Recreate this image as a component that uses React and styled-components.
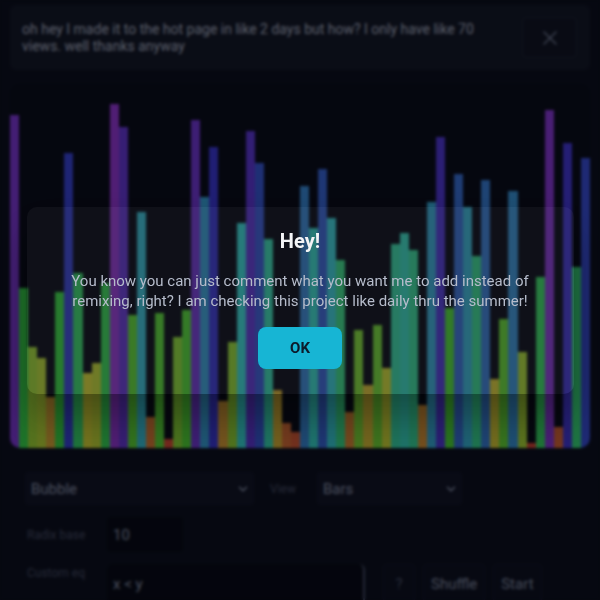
import React from 'react';
import styled, { createGlobalStyle } from 'styled-components';
import { X, ChevronDown } from 'lucide-react';

// bar heights in px, read left to right
const bars = [
  333, 160, 101, 90, 51, 156, 295, 175, 75, 85, 165, 344, 321, 133, 236, 31,
  135, 9, 111, 138, 328, 251, 301, 47, 106, 225, 317, 285, 209, 58, 25, 16,
  262, 220, 279, 230, 188, 36, 118, 63, 123, 80, 204, 215, 198, 43, 246, 311,
  140, 274, 241, 192, 268, 69, 129, 257, 96, 5, 171, 338, 21, 305, 181, 290,
];

const barColor = (h) => `hsl(${Math.round((h / 350) * 280)}, 66%, 53%)`;

const App = () => {
  return (
    <>
      <GlobalStyle />
      <Page>
        <Banner>
          <BannerText>
            oh hey I made it to the hot page in like 2 days but how? I only have like 70 views. well thanks anyway
          </BannerText>
          <CloseButton aria-label="Close">
            <X size={24} strokeWidth={1.5} />
          </CloseButton>
        </Banner>

        <Chart>
          {bars.map((h, i) => (
            <Bar key={i} style={{ height: h, background: barColor(h) }} />
          ))}
        </Chart>

        <Controls>
          <Row $gap={16}>
            <SelectWrap $width={229}>
              <Select defaultValue="Bubble">
                <option>Bubble</option>
                <option>Quick</option>
                <option>Merge</option>
              </Select>
              <Chevron size={14} strokeWidth={2.5} />
            </SelectWrap>
            <Label $gapRight={5}>View</Label>
            <SelectWrap $width={145}>
              <Select defaultValue="Bars">
                <option>Bars</option>
                <option>Dots</option>
              </Select>
              <Chevron size={14} strokeWidth={2.5} />
            </SelectWrap>
          </Row>

          <Row $gap={8}>
            <Label $width={74}>Radix base</Label>
            <NumberInput defaultValue="10" />
          </Row>

          <Row $gap={8} $top>
            <Label $width={74}>Custom eq</Label>
            <EqInput defaultValue="x < y" />
            <Button $dim>?</Button>
            <Button>Shuffle</Button>
            <Button>Start</Button>
          </Row>
        </Controls>
      </Page>

      <Overlay>
        <Modal>
          <ModalTitle>Hey!</ModalTitle>
          <ModalText>
            You know you can just comment what you want me to add instead of remixing, right? I am checking this project like daily thru the summer!
          </ModalText>
          <OkButton>OK</OkButton>
        </Modal>
      </Overlay>
    </>
  );
};

const GlobalStyle = createGlobalStyle`
  html, body {
    margin: 0;
    background: #0c1020;
  }

  body {
    font-family: Roboto, "Noto Sans", "Liberation Sans", sans-serif;
  }

  * {
    box-sizing: border-box;
  }
`;

const Page = styled.div`
  padding: 5px 10px 0;
`;

const Banner = styled.div`
  display: flex;
  align-items: center;
  justify-content: space-between;
  height: 65px;
  padding: 0 13px 0 12px;
  background: #131829;
  border-radius: 6px;
`;

const BannerText = styled.p`
  margin: 0;
  max-width: 478px;
  font-size: 14px;
  line-height: 17px;
  color: #a9b0c5;
`;

const CloseButton = styled.button`
  width: 55px;
  height: 41px;
  display: flex;
  align-items: center;
  justify-content: center;
  padding: 0;
  background: #111526;
  border: 1px solid #1f243a;
  border-radius: 4px;
  color: #727c96;
`;

const Chart = styled.div`
  margin-top: 14px;
  height: 364px;
  display: flex;
  align-items: flex-end;
  background: #0a0d1c;
  border-radius: 10px;
  overflow: hidden;
`;

const Bar = styled.div`
  flex: 1;
`;

const Controls = styled.div`
  margin-top: 12px;
  padding: 12px 15px;
  display: flex;
  flex-direction: column;
  gap: 12px;
`;

const Row = styled.div`
  display: flex;
  align-items: ${props => (props.$top ? 'flex-start' : 'center')};
  gap: ${props => props.$gap}px;
`;

const Label = styled.span`
  flex-shrink: 0;
  width: ${props => (props.$width ? `${props.$width}px` : 'auto')};
  padding-left: ${props => (props.$width ? '2px' : '0')};
  margin-right: ${props => props.$gapRight || 0}px;
  font-size: 12px;
  line-height: 18px;
  color: #464c66;
`;

const SelectWrap = styled.div`
  position: relative;
  width: ${props => props.$width}px;
  color: #8a93ad;
`;

const Select = styled.select`
  appearance: none;
  width: 100%;
  height: 33px;
  padding: 0 24px 0 6px;
  background: #111528;
  border: none;
  border-radius: 4px;
  color: #8a93ad;
  font-family: inherit;
  font-size: 15px;
`;

const Chevron = styled(ChevronDown)`
  position: absolute;
  right: 4px;
  top: 50%;
  transform: translateY(-50%);
  pointer-events: none;
`;

const NumberInput = styled.input`
  width: 76px;
  height: 35px;
  padding: 0 6px;
  background: #080b18;
  border: none;
  border-radius: 4px;
  color: #8a93ad;
  font-family: inherit;
  font-size: 15px;
`;

const EqInput = styled.textarea`
  width: 258px;
  height: 42px;
  margin-right: 10px;
  padding: 11px 6px 0;
  background: #080b18;
  border: none;
  border-right: 2px solid #434a66;
  border-radius: 6px;
  color: #8a93ad;
  font-family: inherit;
  font-size: 15px;
  line-height: 18px;
  resize: none;
`;

const Button = styled.button`
  height: 40px;
  min-width: 32px;
  padding: 0 7px;
  background: #0d1122;
  border: 1px solid #13182c;
  border-radius: 4px;
  color: ${props => (props.$dim ? '#4c536c' : '#838ca6')};
  font-family: inherit;
  font-size: 15px;
`;

const Overlay = styled.div`
  position: fixed;
  inset: 0;
  display: flex;
  align-items: center;
  justify-content: center;
  background: rgba(0, 0, 0, 0.46);
  backdrop-filter: blur(1.5px);
`;

const Modal = styled.div`
  width: 547px;
  padding: 22px 24px 25px;
  display: flex;
  flex-direction: column;
  align-items: center;
  text-align: center;
  background: rgba(255, 255, 255, 0.04);
  border-radius: 10px;
  box-shadow: 0 24px 40px rgba(0, 0, 0, 0.35);
`;

const ModalTitle = styled.h2`
  margin: 0;
  font-size: 20px;
  line-height: 24px;
  font-weight: 700;
  color: #f3f4f6;
`;

const ModalText = styled.p`
  margin: 18px 0 16px;
  font-size: 15px;
  line-height: 20px;
  color: #b6bccb;
`;

const OkButton = styled.button`
  width: 84px;
  height: 42px;
  background: #17b5d4;
  border: none;
  border-radius: 8px;
  color: #0c1b2b;
  font-family: inherit;
  font-size: 15px;
  font-weight: 700;
`;

export default App;
